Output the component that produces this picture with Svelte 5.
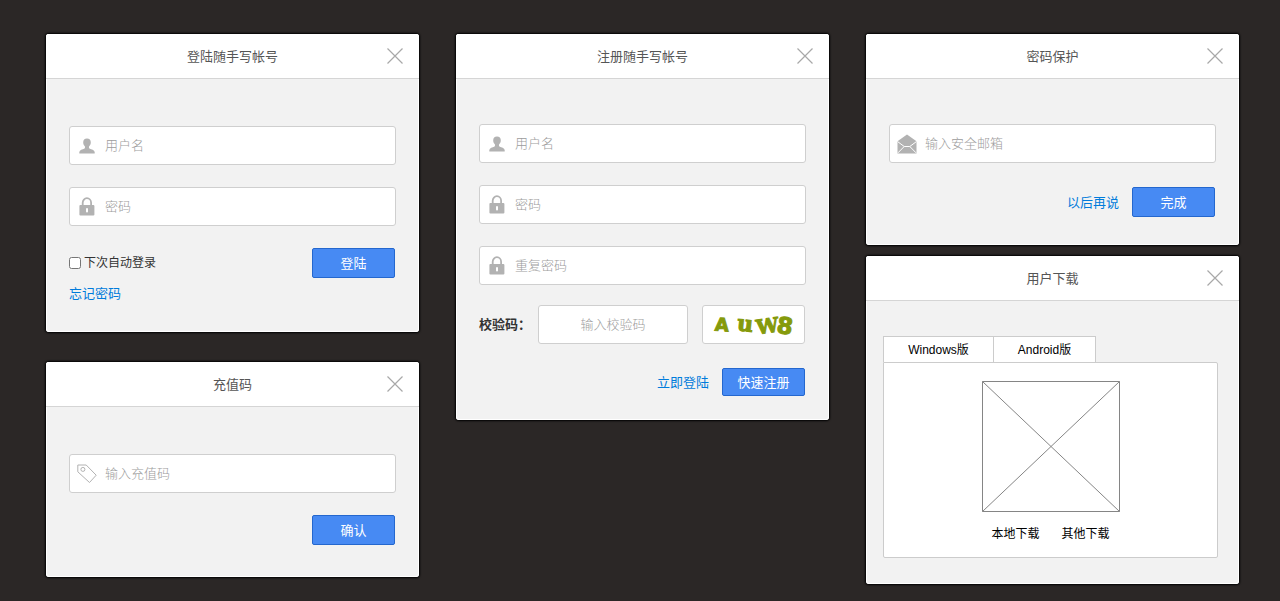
<script>
	let tab = $state('windows');
	let remember = $state(false);

	const tabs = [
		{ id: 'windows', label: 'Windows版' },
		{ id: 'android', label: 'Android版' }
	];
</script>

{#snippet heading(title)}
	<header class="card-head">
		<h2>{title}</h2>
		<button type="button" class="close" aria-label="关闭">
			<svg viewBox="0 0 16 16" width="16" height="16">
				<path d="M0.5 0.5L15.5 15.5M15.5 0.5L0.5 15.5" fill="none" stroke="#a8a8a8" stroke-width="1.200" />
			</svg>
		</button>
	</header>
{/snippet}

{#snippet icon(name)}
	<svg class="icon" viewBox="0 0 20 20" width="20" height="20" aria-hidden="true">
		{#if name === 'user'}
			<path fill="#b2b2b2" d="M10 2.500c-2.500 0-3.800 1.600-3.800 3.900 0 1.700.8 2.800 1.600 3.900 .5.800.3 2-.6 2.400-1.600.6-4.600 1.300-4.900 3.200v1.600h15.400v-1.600c-.3-1.900-3.300-2.600-4.900-3.200-.9-.4-1.100-1.600-.6-2.400.8-1.100 1.600-2.200 1.600-3.900 0-2.300-1.300-3.900-3.800-3.900z" />
		{:else if name === 'lock'}
			<path fill="none" stroke="#b2b2b2" stroke-width="1.800" d="M5.700 8.500V5.800a4.200 4.600 0 0 1 8.400 0v2.700" />
			<rect x="2.400" y="8" width="15" height="10.500" rx="1" fill="#b2b2b2" />
			<rect x="9" y="11" width="2" height="4.500" rx="1" fill="#fff" />
		{:else if name === 'mail'}
			<path fill="#b2b2b2" d="M0.500 7.200L10 0.600l9.500 6.600V19.600H0.500z" />
			<path fill="none" stroke="#fff" d="M0.500 7.500L7.200 12.500h5.600l6.700-5M7.200 12.500L1 18.800M12.800 12.500l6.200 6.300" />
		{:else if name === 'tag'}
			<path fill="none" stroke="#b2b2b2" d="M0.800 1h8.400L19.200 11.200 12.500 18.500 0.800 7.800z" />
			<circle cx="5.900" cy="5.400" r="2" fill="none" stroke="#b2b2b2" />
		{/if}
	</svg>
{/snippet}

{#snippet field(name, label, type = 'text')}
	<label class="field">
		{@render icon(name)}
		<input {type} placeholder={label} aria-label={label} />
	</label>
{/snippet}

<main>
	<div class="column">
		<section class="card">
			{@render heading('登陆随手写帐号')}
			<form class="body">
				{@render field('user', '用户名')}
				{@render field('lock', '密码', 'password')}
				<div class="row">
					<label class="remember">
						<input type="checkbox" bind:checked={remember} />
						下次自动登录
					</label>
					<button type="button" class="primary">登陆</button>
				</div>
				<a class="forgot" href="#forgot">忘记密码</a>
			</form>
		</section>

		<section class="card">
			{@render heading('充值码')}
			<form class="body recharge">
				{@render field('tag', '输入充值码')}
				<div class="row end">
					<button type="button" class="primary">确认</button>
				</div>
			</form>
		</section>
	</div>

	<div class="column">
		<section class="card">
			{@render heading('注册随手写帐号')}
			<form class="body register">
				{@render field('user', '用户名')}
				{@render field('lock', '密码', 'password')}
				{@render field('lock', '重复密码', 'password')}
				<div class="verify">
					<label for="captcha">校验码：</label>
					<input id="captcha" type="text" placeholder="输入校验码" />
					<div class="captcha">
						<svg viewBox="0 0 100 36" width="100" height="36">
							<g fill="#859a0b" stroke="#859a0b">
								<text class="sans" x="11" y="24" font-size="18" transform="rotate(4 19 18)">A</text>
								<text x="33" y="24" font-size="22" transform="rotate(6 40 18)">u</text>
								<text x="52" y="26" font-size="20" transform="rotate(-8 63 18)">W</text>
								<text class="sans" x="73" y="27" font-size="23" transform="rotate(9 82 18)">8</text>
							</g>
						</svg>
					</div>
				</div>
				<div class="row end">
					<a href="#login">立即登陆</a>
					<button type="button" class="primary">快速注册</button>
				</div>
			</form>
		</section>
	</div>

	<div class="column tight">
		<section class="card">
			{@render heading('密码保护')}
			<form class="body protect">
				{@render field('mail', '输入安全邮箱', 'email')}
				<div class="row end">
					<a href="#later">以后再说</a>
					<button type="button" class="primary">完成</button>
				</div>
			</form>
		</section>

		<section class="card">
			{@render heading('用户下载')}
			<div class="download">
				<div class="tabs" role="tablist">
					{#each tabs as t}
						<button type="button" role="tab" aria-selected={tab === t.id} onclick={() => (tab = t.id)}>{t.label}</button>
					{/each}
				</div>
				<div class="panel" role="tabpanel">
					<svg viewBox="0 0 138 131" width="138" height="131" aria-hidden="true">
						<path d="M0.500 0.500H137.500V130.500H0.500zL137.500 130.500M137.500 0.500L0.500 130.500" fill="none" stroke="#858585" />
					</svg>
					<div class="links">
						<a href="#local">本地下载</a>
						<a href="#other">其他下载</a>
					</div>
				</div>
			</div>
		</section>
	</div>
</main>

<style>
	:global(body) {
		background: #2b2726;
	}

	main {
		display: grid;
		grid-template-columns: repeat(3, 1fr);
		gap: 37px;
		padding: 34px 41px 16px 46px;
		font-family: "Liberation Sans", "Noto Sans CJK SC", sans-serif;
		font-size: 13px;
		line-height: 20px;
		color: #333;
	}

	.column {
		display: flex;
		flex-direction: column;
		gap: 30px;
		min-width: 0;
	}

	.column.tight {
		gap: 11px;
	}

	.card {
		box-sizing: border-box;
		background: #f2f2f2;
		border-radius: 3px;
		box-shadow: 0 0 2px 1px #000, inset 0 0 0 1px #fff;
	}

	.card-head {
		display: grid;
		grid-template-columns: 1fr auto 1fr;
		align-items: center;
		height: 44px;
		padding: 0 16px;
		background: #fff;
		border-bottom: 1px solid #d5d5d5;
		border-radius: 3px 3px 0 0;
	}

	h2 {
		grid-column: 2;
		margin: 0;
		padding-top: 2px;
		font-size: 13px;
		font-weight: 400;
		color: #555;
	}

	button,
	input {
		font: inherit;
	}

	button {
		cursor: pointer;
	}

	.close {
		justify-self: end;
		display: flex;
		padding: 0;
		border: 0;
		background: none;
	}

	.body {
		display: flex;
		flex-direction: column;
		gap: 22px;
		padding: 47px 23px 28px;
	}

	.body.recharge {
		padding-bottom: 32px;
	}

	.body.register {
		padding-top: 45px;
		padding-bottom: 24px;
	}

	.body.protect {
		gap: 24px;
		padding-top: 45px;
	}

	.field,
	.verify input,
	.captcha {
		box-sizing: border-box;
		height: 39px;
		background: #fff;
		border: 1px solid #cfcfcf;
		border-radius: 3px;
	}

	.field {
		display: flex;
		align-items: center;
		gap: 8px;
		padding: 0 7px;
	}

	.icon {
		flex: none;
	}

	.field input {
		flex: 1;
		min-width: 0;
		padding: 0;
		border: 0;
		outline: 0;
		background: none;
	}

	input::placeholder {
		font-weight: 300;
		color: #9c9c9c;
		opacity: 1;
	}

	.row {
		display: flex;
		align-items: center;
		justify-content: space-between;
		padding-right: 1px;
	}

	.row.end {
		justify-content: flex-end;
		gap: 13px;
	}

	.primary {
		width: 83px;
		height: 30px;
		padding: 2px 0 0;
		color: #fff;
		background: #478af3;
		border: 1px solid #2467ce;
		border-radius: 2px;
	}

	.register .primary {
		height: 28px;
	}

	a {
		padding-top: 2px;
		color: #007bdb;
		text-decoration: none;
	}

	.remember {
		display: flex;
		align-items: center;
		gap: 3px;
		font-size: 12px;
	}

	.remember input {
		width: 12px;
		height: 12px;
		margin: 0;
	}

	.forgot {
		align-self: flex-start;
		margin-top: -18px;
	}

	.verify {
		display: flex;
		align-items: center;
		margin: -2px 1px 2px 0;
	}

	.verify label {
		flex: 1;
		font-weight: 700;
		white-space: nowrap;
	}

	.verify input {
		width: 150px;
		margin-right: 14px;
		padding: 0;
		text-align: center;
	}

	.captcha {
		display: flex;
		align-items: center;
		justify-content: center;
		width: 103px;
	}

	.captcha text {
		font-family: "DejaVu Serif", serif;
		font-weight: 700;
	}

	.captcha .sans {
		font-family: "DejaVu Sans", sans-serif;
	}

	.download {
		padding: 35px 21px 26px 17px;
		font-size: 12px;
	}

	.tabs {
		display: flex;
	}

	.tabs button {
		box-sizing: border-box;
		height: 26px;
		width: 102px;
		padding: 0;
		color: #000;
		background: #fff;
		border: 1px solid #ccc;
		border-width: 1px 1px 0 0;
	}

	.tabs button:first-child {
		width: 111px;
		border-left-width: 1px;
	}

	.panel {
		display: flex;
		flex-direction: column;
		align-items: center;
		gap: 10px;
		padding: 18px 0 13px;
		background: #fff;
		border: 1px solid #ccc;
		border-radius: 0 2px 2px 2px;
	}

	.links {
		display: flex;
		gap: 22px;
	}

	.links a {
		color: #000;
	}
</style>
